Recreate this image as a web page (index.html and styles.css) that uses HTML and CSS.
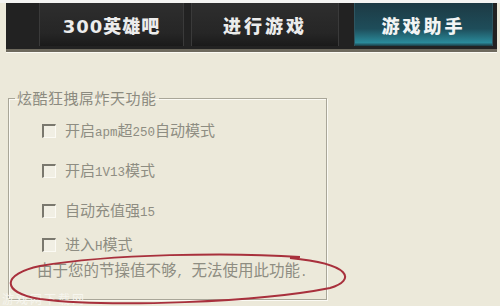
FILE: index.html
```html
<!DOCTYPE html>
<html>
<head>
<meta charset="utf-8">
<link rel="stylesheet" href="styles.css">
</head>
<body>
<div class="page">
  <div class="topbar">
    <div class="tabs">
      <div class="tab">300英雄吧</div>
      <div class="tab">进行游戏</div>
      <div class="tab active">游戏助手</div>
    </div>
  </div>
  <div class="content">
    <fieldset class="group">
      <legend>炫酷狂拽屌炸天功能</legend>
      <ul class="opts">
        <li><span class="cb"></span><span class="lbl">开启<span class="sm">apm</span>超<span class="sm">250</span>自动模式</span></li>
        <li><span class="cb"></span><span class="lbl">开启<span class="sm">1V13</span>模式</span></li>
        <li class="third"><span class="cb"></span><span class="lbl">自动充值强<span class="sm">15</span></span></li>
        <li class="last"><span class="cb"></span><span class="lbl">进入<span class="sm">H</span>模式</span></li>
      </ul>
      <p class="msg">由于您的节操值不够<span class="sm">, </span>无法使用此功能<span class="sm">.</span></p>
    </fieldset>
  </div>
  <div class="wm">游戏网下载网</div>
  <svg class="ring" width="500" height="306" viewBox="0 0 500 306">
    <path d="M300 257 C 230 252, 110 254, 40 266 C 2 274, 0 292, 40 299 C 110 308, 260 302, 330 288 C 356 280, 352 264, 290 258" fill="none" stroke="#a8303c" stroke-width="2"/>
  </svg>
</div>
</body>
</html>
```
FILE: styles.css
```css
html, body {
  margin: 0;
  padding: 0;
}
body {
  width: 500px;
  height: 306px;
  overflow: hidden;
  background: #ece9da;
  font-family: "Noto Sans CJK SC", "Liberation Sans", sans-serif;
}
.page {
  position: relative;
  width: 500px;
  height: 306px;
  padding-top: 3px;
  box-sizing: border-box;
  background: linear-gradient(#f4f4f2 0 3px, #ece9da 3px);
}
.topbar {
  margin-left: 6px;
  margin-right: 3px;
  height: 46px;
  background: #222;
  border-bottom: 3px solid #6e6a5e;
  box-shadow: 0 1px 0 #fbfaf4;
  padding-left: 33px;
  box-sizing: content-box;
}
.tabs {
  display: flex;
  height: 43px;
}
.tab {
  width: 146px;
  height: 43px;
  margin-right: 7px;
  display: flex;
  align-items: center;
  justify-content: center;
  background: linear-gradient(#2e2e2e, #262626 70%, #1a1a1a);
  border-left: 1px solid #3a3a3a;
  border-right: 1px solid #3a3a3a;
  color: #ececec;
  font-size: 18px;
  font-weight: 900;
  letter-spacing: 3px;
  font-family: "Noto Sans CJK SC", "DejaVu Sans", sans-serif;
}
.tab:first-child {
  width: 143px;
  letter-spacing: 1px;
  font-family: "DejaVu Sans", "Noto Sans CJK SC", sans-serif;
}
.tab.active {
  width: 137px;
  margin-left: 8px;
  margin-right: 0;
  background: linear-gradient(#1d3a44, #1e4d5a 60%, #2a8a9a 92%, #1b3a42);
  border-color: #2e5560;
  color: #f2f4f4;
}
.content {
  padding: 37px 0 0 8px;
}
.group {
  margin: 0;
  width: 319px;
  height: 211px;
  box-sizing: border-box;
  border: 1px solid #a9a698;
  box-shadow: 1px 1px 0 #fbfaf4, inset 1px 1px 0 #fbfaf4;
  padding: 0;
}
.group legend {
  margin-left: 6px;
  padding: 0 2px;
  font-size: 15px;
  letter-spacing: 0.5px;
  color: #8c8b80;
  line-height: 18px;
}
.opts {
  list-style: none;
  margin: 15px 0 0 0;
  padding: 0 0 0 33px;
}
.opts li {
  display: flex;
  align-items: center;
  height: 18px;
  margin-bottom: 22px;
}
.opts li.third {
  margin-bottom: 16px;
}
.opts li.last {
  margin-bottom: 0;
}
.cb {
  width: 11px;
  height: 11px;
  margin-right: 9px;
  border-top: 2px solid #7a786e;
  border-left: 2px solid #7a786e;
  border-right: 1px solid #fbfaf4;
  border-bottom: 1px solid #fbfaf4;
  background: #f1efe4;
  box-sizing: content-box;
}
.lbl {
  font-size: 15px;
  color: #8e8d82;
  line-height: 18px;
}
.sm {
  font-family: "Liberation Mono", monospace;
  font-size: 12.5px;
}
.msg {
  margin: 6px 0 0 28px;
  font-size: 15.5px;
  color: #8e8d82;
  line-height: 18px;
}
.wm {
  position: absolute;
  left: 2px;
  top: 290px;
  font-size: 12px;
  color: #f6f5ee;
  letter-spacing: 2px;
}
.ring {
  position: absolute;
  left: 0;
  top: 0;
}
```
